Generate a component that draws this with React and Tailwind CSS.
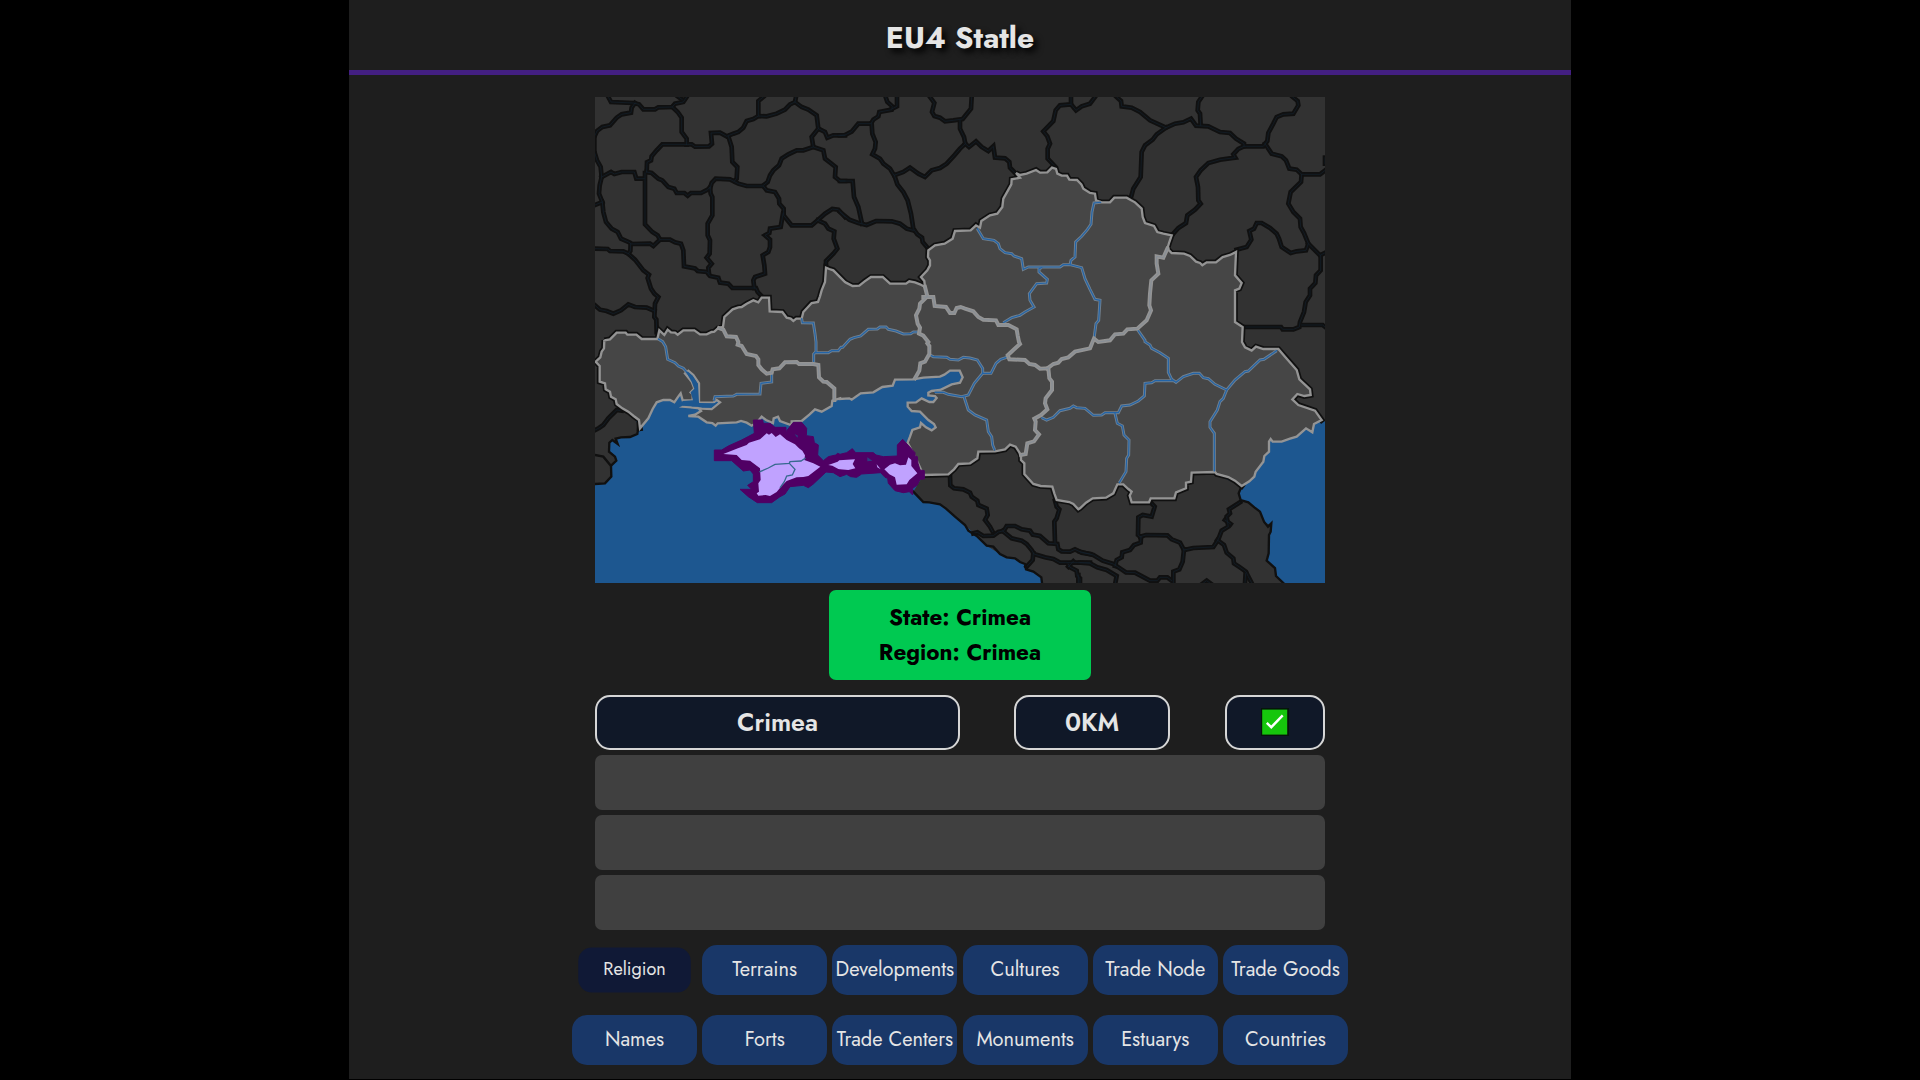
import React from "react";

// The map is drawn on a 2190x1458 grid made of six tiles; each entry is the origin of a tile.
const TILES = { 1: [0, 0], 2: [735, 0], 3: [1455, 0], 4: [0, 729], 5: [735, 729], 6: [1455, 729] };

// Turns [tile, "x y x y ...", tile, "x y ...", ...] into an SVG point list.
function pts(list) {
  const out = [];
  for (let i = 0; i < list.length; i += 2) {
    const [ox, oy] = TILES[list[i]];
    const n = list[i + 1].trim().split(/\s+/).map(Number);
    for (let j = 0; j < n.length; j += 2) out.push(`${n[j] + ox},${n[j + 1] + oy}`);
  }
  return out.join(" ");
}

const NORTH = [
  4, "135 265 132 240 116 228 100 215 82 205 65 192 62 178 48 170 45 155 32 148 30 130 14 125 14 78 2 65 16 52 20 35 27 25 28 0",
  1, "28 730 45 727 65 707 92 707 97 713 124 713 140 726 187 726 193 700 208 714 218 698 228 706 240 707 248 713 265 700 298 700 315 712 335 712 350 705 358 704 370 693 384 690 388 660 413 637 430 631 440 630 455 620 475 610 490 616 500 602 522 602 524 643 562 645 575 662 587 665 595 672 604 665 620 665 625 645 650 618 669 615 675 598 680 580 690 555 693 512 703 516 715 520 750 555",
  2, "18 557 38 567 58 566 74 553 93 540 128 540 150 560 198 560 208 553 225 556 240 562 255 570 253 552 243 540 262 520 270 505 270 490 264 480 265 460 285 445 314 440 338 425 345 402 392 400 408 385 420 392 424 372 450 355 472 350 487 330 490 305 504 280 514 262 515 247 540 242 528 228 540 234 560 230 588 219 600 227 622 226 636 212 648 216 652 230 665 236 681 236 688 248 711 249 724 262 730 275 750 288",
  3, "45 290 48 310 65 316 90 316 103 302 140 302 152 309 165 316 185 335 188 360 195 378 222 387 232 405 250 410 275 415 268 435 262 455 275 468 312 470 330 477 348 494 360 498 367 505 380 496 408 496 428 480 450 474 468 465 465 535 485 558 478 575 465 580 465 675 488 690 486 735",
  6, "495 22 515 32 528 20 550 27 595 27 615 50 650 90 658 118 690 148 692 165 673 168 652 162 637 178 655 195 705 212 725 240",
];
const EAST_COAST = [6, "725 240 702 252 697 277 678 265 650 290 630 296 605 305 578 305 572 297 567 305 567 335 553 348 550 365 527 395 523 410 508 424 485 438"];
const SOUTH = [
  6, "485 438 465 422 445 411 410 402 405 396 335 398 333 425 318 428 318 445 288 457 283 475 212 475 207 487 155 487 149 467 155 455 145 447 130 433 112 433 100 460 78 473 38 475 18 488 0 505",
  5, "715 508 700 492 688 486 650 480 643 460 637 440 602 438 580 432 553 402 553 370 543 360 543 345 527 320 510 314 495 328 465 334 415 335 412 355 390 370 355 372 342 388 325 403 250 405",
];
const COAST = [
  5, "250 405 230 360 203 308 210 290 217 270 240 262 243 249 258 262 275 271 287 262 282 252 265 240 240 215 215 213 203 200 203 188 228 187 245 175 268 186 280 186 290 174 285 168 265 166 265 158 275 153 300 150 335 133 360 128 368 112 359 92 330 92 313 104 300 110 250 113 220 118 165 119 158 137 127 141 100 157 62 160 35 179 28 175 0 177",
  4, "735 175 712 182 710 198 680 215 660 208 643 224 620 243 590 244 590 256 555 243 549 230 536 235 534 249 513 240 500 230 485 248 470 257 455 248 438 243 425 247 368 250 362 257 352 249 335 247 310 230 280 228 300 224 318 213 308 203 290 202 265 200 280 193 288 202 320 206 350 207 375 187 365 180 355 188 312 188 312 130 295 105 280 92 270 100 290 125 298 146 287 157 293 162 293 181 263 181 257 160 248 172 238 187 225 180 205 180 185 187 173 207 160 235 135 265",
];
const SEA = [
  4, "135 265 128 275 127 282 105 291 78 292 62 296 68 308 50 300 43 308 42 335 60 350 64 362 50 375 49 410 30 430 0 432 0 729",
  5, "606 729 604 710 580 695 558 688 555 672 525 655 500 652 480 642 440 617 410 588 375 555 345 530 318 506 300 493 268 487 250 486 220 455 250 405 340 300 500 100 300 0",
  4, "700 100 400 100 200 0 100 200",
];
const CASPIAN = [6, "735 240 725 240 500 250 400 400 485 438 478 460 482 480 505 487 540 515 555 548 572 555 572 575 568 590 566 640 560 662 585 684 590 708 610 729 735 729"];
const WEST_SHORE = [4, "130 240 128 275 127 282 105 291 78 292 62 296 68 312 52 300 43 308 42 335 60 350 64 362 50 375"];
const WEST_SHORE_LOW = [4, "0 345 25 350 48 378 49 410 30 430 0 432"];
const SOUTH_SHORE = [5, "220 455 250 486 268 487 300 493 318 506 345 530 375 555 385 572 410 588 440 617 460 620 480 642 500 652 525 655 540 666 555 672 558 688 580 695 604 712 606 729"];
const CASPIAN_SHORE = [6, "485 438 476 460 482 480 505 487 523 502 540 515 552 545 564 560 574 550 572 575 567 585 566 640 560 662 585 684 588 708 610 729"];

const DARK_BORDERS = [
  [1, "40 0 48 15 115 18 132 22 145 37 180 37 190 31 232 30 240 20 265 15 275 0"],
  [1, "248 -2 262 8"],
  [1, "120 18 110 32 108 47 80 52 65 62 45 85 22 90 6 102 0 115"],
  [1, "0 170 6 190 17 210 20 240 14 265 12 290 22 315 25 345 33 375 50 395 68 405 78 425 105 437 108 441 165 440 175 447 195 428 225 428 240 436 258 440 265 460 267 508 300 514 308 522 336 525 345 537 370 542 375 557 400 560 412 573 483 573 488 585 502 600"],
  [1, "232 30 248 45 260 62 260 105 275 125 275 142"],
  [1, "275 142 290 142 300 149 342 148 351 140 348 108 375 107 395 118 415 110 430 105 445 92 455 72 475 66 490 57 515 58 545 50 570 38 585 22 600 15 603 0"],
  [1, "275 142 202 142 185 160 170 178 168 190 156 196 155 225"],
  [1, "490 57 490 12 505 0"],
  [1, "600 15 620 30 640 38 665 55 670 95 690 105 697 122 715 115 750 115"],
  [1, "670 95 650 120 655 150 625 160 605 160 580 172 560 185 552 205 535 220 525 235 518 255 505 265"],
  [1, "655 150 685 160 690 185 722 210 720 240 735 252 750 252"],
  [1, "400 118 410 150 412 195 427 210 425 245 418 252"],
  [1, "345 275 350 258 362 245 405 247 430 260 455 267 505 267 515 280 540 285 552 305 553 320 566 335 566 355 590 385 650 385 668 370 690 350 712 336 730 338 750 360"],
  [1, "564 350 557 390 525 395 523 408 510 415 525 428 525 450 520 465 503 475 508 505 510 530 480 540 475 550 478 573"],
  [1, "155 225 170 228 190 245 202 250 220 270 238 275 245 288 268 288 278 296 288 288 318 288 338 278 345 270 347 290 352 300 352 355 338 380 338 415 345 430 344 470 335 482 350 500 340 512 342 530"],
  [1, "150 228 150 382 172 405 188 415 195 428"],
  [1, "20 240 48 225 58 231 80 225 118 225 124 245 148 245"],
  [1, "-3 325 22 315"],
  [1, "0 455 38 456 45 462 85 463 100 470 120 488 145 520 162 533 158 543 168 575 178 590 190 600 180 620 178 660 184 668 185 705"],
  [1, "107 441 106 462 100 470"],
  [1, "0 625 15 638 35 642 55 650 78 640 100 622 120 630 155 632 178 642"],
  [1, "668 370 690 380 700 395 718 403 716 425 727 455 715 470 693 492 693 512"],
  [1, "-2 110 -2 170"],
  [2, "0 115 15 114 35 104 55 80 93 80 100 68 115 58 118 45 155 38 157 28 142 15 137 0"],
  [2, "157 35 171 28 171 0"],
  [2, "95 80 97 110 107 135 105 155 97 172 120 185 130 200 150 215 162 235 190 225 210 212 235 230 255 240 275 220 300 213 320 200 343 175 360 155 376 140 372 120 360 95 360 70"],
  [2, "270 0 283 18 276 45 283 57 300 62 315 73 340 70 368 66 393 35 395 0"],
  [2, "376 140 387 150 408 133 425 150 445 162 460 148 465 182 495 184 508 195 510 212 535 238"],
  [2, "163 235 172 262 190 285 203 310 213 350 220 395 232 412 246 422 248 435 265 455"],
  [2, "0 252 38 252 42 300 55 330 66 380"],
  [2, "0 345 28 368 55 378 80 384 108 372 155 373 180 380 200 395 220 400"],
  [2, "693 0 693 22 660 25 647 40 640 72 610 103 622 118 630 140 623 155 623 185 645 208"],
  [2, "693 22 708 40 725 28 750 20", 3, "45 0"],
  [3, "110 0 123 12 125 28 155 32 180 45 210 70 258 92 285 80 310 76 333 65 348 86 385 88 420 105 450 108 468 125 492 140 492 148 550 148 562 132 565 108 580 80 590 60 610 52 640 50 655 25 653 12 638 0"],
  [3, "258 92 230 112 218 128 195 145 185 165 182 240 160 275 152 305"],
  [3, "362 85 360 50 353 40 355 15 365 0"],
  [3, "492 148 475 156 460 172 466 182 420 188 385 198 362 220 348 240 354 270 355 310 362 320 345 338 322 355 318 378 295 393 278 412"],
  [3, "555 140 575 170 605 178 618 190 628 215 650 218 665 232 720 232 738 218"],
  [3, "665 232 663 255 632 285 625 320 640 345 660 365 662 390 672 408 685 440 678 460 650 463 632 468 605 450 597 425 590 410 570 393 545 378 530 378 522 395 508 402 514 428 500 450 470 458"],
  [3, "735 182 735 200"],
  [3, "685 440 700 455 720 475 738 466"],
  [3, "722 475 722 520 708 535 706 558 690 575 690 595 677 615 672 645 660 675 658 690 640 697 608 697 603 690 488 690"],
  [3, "665 684 728 684 738 692"],
  [4, "-3 272 12 264 25 255 40 235 65 210 80 212"],
  [5, "330 408 331 436 342 445 370 448 390 458 395 470 412 482 415 495 440 506 443 525 435 540 450 560 458 575"],
  [5, "400 580 412 577 430 588 460 587 475 576 492 572 500 558 525 558 545 568 570 572 578 584 600 588 625 610 652 612 655 628 665 634 690 635 705 628 725 638 750 642"],
  [5, "645 482 650 500 658 508 650 535 643 545 645 608"],
  [5, "488 573 515 595 545 602 560 612 575 630 582 642 615 652 640 657 660 668 750 668"],
  [5, "580 640 578 660 560 680"],
  [5, "685 680 700 664"],
  [5, "685 672 690 682 710 692 712 708 720 715 720 729"],
  [6, "0 635 40 645 68 662 100 672 120 685 138 697 165 698 210 722 232 722 240 712 262 712 275 722"],
  [6, "0 668 30 670 52 682 80 690 110 708 106 729"],
  [6, "105 678 110 660 125 652 127 637 150 630 162 615 182 608 183 590"],
  [6, "180 590 198 585 262 586 275 598 300 608 312 630 340 624 400 621 415 598 425 572 445 560 440 530 450 520 447 508 480 487"],
  [6, "435 540 452 552"],
  [6, "215 490 224 500 215 530 188 525 175 532 174 585 183 592"],
  [6, "312 628 308 665 298 688 280 695 280 729"],
  [6, "412 600 432 615 440 638 460 655 462 670 480 682 498 695 505 710 515 729"],
  [6, "497 700 495 729"],
  [6, "365 733 380 722 395 733"],
  [6, "-5 705 -5 729"],
];

const AREA_BORDERS = [
  [1, "372 693 385 698 395 718 423 720 430 735", 4, "428 14 440 18 455 42 483 48 490 58 490 75 500 88 515 101 530 98 533 88 553 85 570 67 605 66 612 72 655 72 670 75 672 112 685 125 695 126 718 145 718 180"],
  [2, "255 570 262 598 240 620 238 635 228 655 233 680 240 692 237 710 250 716 265 735", 5, "262 10 268 18 268 42 255 65 241 70 238 92 225 115"],
  [2, "250 600 280 600 284 627 318 630 330 648 343 648 350 633 362 630 375 635 400 643 415 660 430 668 468 670 475 684 505 684 530 697 533 715 537 735", 5, "540 12 520 30 503 46 508 58 555 60 568 72 585 75 600 86 625 85 628 115 636 125 636 150 617 175 615 190 622 208 603 225 583 236 587 245 585 270 597 283 582 304 562 310 557 342 543 345"],
  [5, "622 85 640 72 655 68 665 57 685 52 705 35 750 25", 6, "32 20 40 0", 3, "42 725 55 735 90 730 105 712 130 710 142 697 172 695 200 670 213 640 208 625 210 590 214 550 235 530 230 500 230 478 250 482 262 455"],
];

const RIVERS = [
  [4, "190 -3 203 5 212 20 218 58 240 68 250 78 265 85 280 102"],
  [4, "357 182 360 170 415 168 425 163 495 162 498 130 530 126 530 98"],
  [1, "620 665 622 677 655 678 660 710 663 735", 4, "663 35 656 42 656 68"],
  [4, "660 38 700 38 710 32 730 32 738 22", 5, "8 22 30 -2", 2, "42 722 62 717 85 697 112 696 120 690 138 690 145 697 168 702 190 711 212 710 220 705 235 705"],
  [2, "412 395 430 425 462 430 475 440 480 455 495 467 515 470 522 477 545 485 550 517 565 510 660 510 670 503 690 503 725 512 735 545 750 577", 3, "45 607 60 610 56 670 48 680 42 725"],
  [2, "690 503 693 490 705 480 707 435 725 418 742 398", 3, "33 382 36 345 42 318 62 316"],
  [2, "605 512 597 515 597 525 622 547 620 558 590 560 568 590 570 610 582 630 555 645 540 655 515 662 490 677"],
  [3, "172 697 195 730", 6, "195 5 210 15 215 25 240 38 265 55 265 97 275 118 288 127 310 110 340 100 358 100 370 113 385 116 405 133 440 150 465 120 495 95 505 93 540 60 552 58 590 32"],
  [6, "440 150 430 175 420 185 412 210 390 245 390 262 403 280 403 393"],
  [6, "280 122 225 122 215 128 195 130 193 168 175 183 150 195 125 198 115 218 75 218 65 225 40 226 15 205 -10 203", 5, "700 198 690 205 660 212 640 232 620 240 605 233"],
  [6, "105 220 112 250 127 258 132 285 147 300 146 345 140 355 138 395 118 428"],
  [5, "270 45 280 50 320 52 330 58 355 60 370 52 390 54 412 60 428 85 428 100 453 100 468 70 482 58 500 52"],
  [5, "428 100 403 130 385 165 365 170 325 163 310 157 285 157"],
  [5, "372 170 385 210 405 225 440 240 445 275 455 290 458 315 464 330"],
];

const CRIMEA_EDGE = [
  4, "358 330 380 330 400 318 440 300 478 280 475 240 503 240 505 250 525 250 540 262 573 262 573 275 595 247 620 247 635 265 634 287 655 290 658 308 670 315 668 345 685 362 700 350 722 345 728 340",
  5, "0 343 20 338 37 326 47 338 100 338 108 345 130 350 172 348 172 315 188 298 225 338 225 348 232 350 234 370 240 390 253 392 253 417 240 418 232 435 218 445 218 465 208 455 190 458 165 452 145 430 143 415 135 412 122 398 65 402 50 412 32 410 20 403 0 410",
  4, "715 398 693 396 655 432 640 443 625 436 585 440 570 462 555 470 530 488 487 488 460 470 435 448 470 448 458 436 475 425 475 402 465 390 445 393 410 362 358 362",
];
const CRIMEA_LAND = [
  [4, "385 342 425 326 455 315 462 308 495 298 515 280 522 284 530 279 542 291 555 283 575 300 600 313 612 325 622 332 630 346 628 360 655 370 676 380 640 408 625 411 605 412 575 423 558 440 545 456 525 468 512 465 490 467 485 460 492 455 490 430 497 420 495 385 465 362 440 360 425 345"],
  [4, "700 375 728 365 733 361", 5, "45 358 38 372 46 385 25 390 0 388", 4, "730 387 712 377"],
  [5, "133 388 150 374 165 370 180 376 198 374 205 352 214 360 214 378 232 400 208 420 200 433 170 434 165 412 148 403"],
  [5, "110 373 122 388 112 382"],
];
const CRIMEA_LINES = [
  [4, "495 395 520 384 540 373 583 370 585 365 618 363 630 355"],
  [4, "583 370 600 388 592 405 575 408 568 425 556 442"],
];

function Lines({ items, ...props }) {
  return (
    <g fill="none" strokeLinejoin="miter" strokeLinecap="square" {...props}>
      {items.map((l, i) => (
        <polyline key={i} points={pts(l)} />
      ))}
    </g>
  );
}

function StateMap() {
  const mainland = [...NORTH, ...EAST_COAST, ...SOUTH, ...COAST];
  return (
    <svg viewBox="0 0 2190 1458" className="block h-[486px] w-[730px] shrink-0 bg-[#323232]">
      <polygon points={pts(SEA)} fill="#1d5790" />
      <polygon points={pts(CASPIAN)} fill="#1d5790" />
      <Lines items={DARK_BORDERS} stroke="#101010" strokeWidth="14" />
      <Lines items={DARK_BORDERS} stroke="#14212e" strokeWidth="2" />
      <Lines items={[WEST_SHORE, WEST_SHORE_LOW, SOUTH_SHORE, CASPIAN_SHORE]} stroke="#101010" strokeWidth="7" />
      <Lines items={[NORTH, SOUTH]} stroke="#101010" strokeWidth="17" />
      <polygon points={pts(mainland)} fill="#464646" stroke="#949494" strokeWidth="7" />
      <Lines items={RIVERS} stroke="#71808f" strokeWidth="9" strokeLinecap="butt" />
      <Lines items={RIVERS} stroke="#2264a8" strokeWidth="3.5" />
      <Lines items={AREA_BORDERS} stroke="#949494" strokeWidth="12" />
      <Lines items={AREA_BORDERS} stroke="#7f8b98" strokeWidth="2" />
      <polygon points={pts([4, "273 96 290 125 298 146 287 157 294 181 263 183 263 197 350 203 369 187 355 190 312 189 309 132 293 107 280 96"])} fill="#1d5790" />
      <polygon points={pts(CRIMEA_EDGE)} fill="#500064" stroke="#500064" strokeWidth="3" />
      {CRIMEA_LAND.map((l, i) => (
        <polygon key={i} points={pts(l)} fill="#c0a2ff" />
      ))}
      <polygon points={pts([5, "82 352 97 362 82 364"])} fill="#2c3c80" />
      <polygon points={pts([4, "599 282 609 287 607 293"])} fill="#2c3c80" />
      <Lines items={CRIMEA_LINES} stroke="#37698f" strokeWidth="4" />
    </svg>
  );
}

function CheckMark() {
  return (
    <svg viewBox="0 0 28 28" className="mb-px h-7 w-7">
      <rect width="28" height="28" fill="#06140b" />
      <rect x="1.2" y="1.6" width="25" height="25" fill="#16c60c" />
      <path d="M5.8 14.8 10.3 19.2 21.7 7.3" fill="none" stroke="#fff" strokeWidth="2.4" />
    </svg>
  );
}

const HINTS = [
  "Religion",
  "Terrains",
  "Developments",
  "Cultures",
  "Trade Node",
  "Trade Goods",
  "Names",
  "Forts",
  "Trade Centers",
  "Monuments",
  "Estuarys",
  "Countries",
];

const CELL = "flex h-[55px] items-center justify-center rounded-[15px] border-2 border-[#d6d6d6] bg-[#101828] text-[25px] font-semibold";

export default function App() {
  return (
    <div className="flex h-[1080px] justify-center overflow-hidden bg-black font-['Jost','Lato',sans-serif] text-[#e5e5e5]">
      <div className="flex h-[1079px] w-[1222px] flex-col items-center bg-[#1e1e1e]">
        <header className="flex h-[75px] w-full shrink-0 items-center justify-center border-b-5 border-[#431f82] pt-1.5">
          <h1 className="text-[30px] leading-none font-bold [text-shadow:4px_4px_6px_#000]">EU4 Statle</h1>
        </header>
        <main className="flex flex-col items-center pt-[22px]">
          <StateMap />
          <div className="mt-[7px] flex h-[90px] w-[262px] flex-col items-center justify-center rounded-[7px] bg-[#00c951] text-[22.5px] leading-[35px] font-bold text-black">
            <p>State: Crimea</p>
            <p>Region: Crimea</p>
          </div>
          <div className="mt-[15px] flex w-[730px]">
            <div className={`${CELL} w-[365px]`}>Crimea</div>
            <div className={`${CELL} mr-[55px] ml-[54px] w-[156px]`}>0KM</div>
            <div className={`${CELL} w-[100px]`}>
              <CheckMark />
            </div>
          </div>
          <div className="mt-[5px] flex w-[730px] flex-col gap-[5px]">
            <div className="h-[55px] rounded-[7px] bg-[#404040]" />
            <div className="h-[55px] rounded-[7px] bg-[#404040]" />
            <div className="h-[55px] rounded-[7px] bg-[#404040]" />
          </div>
          <div className="mt-[15px] grid w-[776px] grid-cols-6 justify-items-center gap-x-[5.2px] gap-y-5">
            {HINTS.map((label, i) => (
              <button
                key={label}
                className={`flex h-[50px] w-[125px] items-center justify-center rounded-[15px] text-[20px] whitespace-nowrap ${
                  i === 0 ? "scale-90 bg-[#101936]" : "bg-[#193768]"
                }`}
              >
                {label}
              </button>
            ))}
          </div>
        </main>
      </div>
    </div>
  );
}
